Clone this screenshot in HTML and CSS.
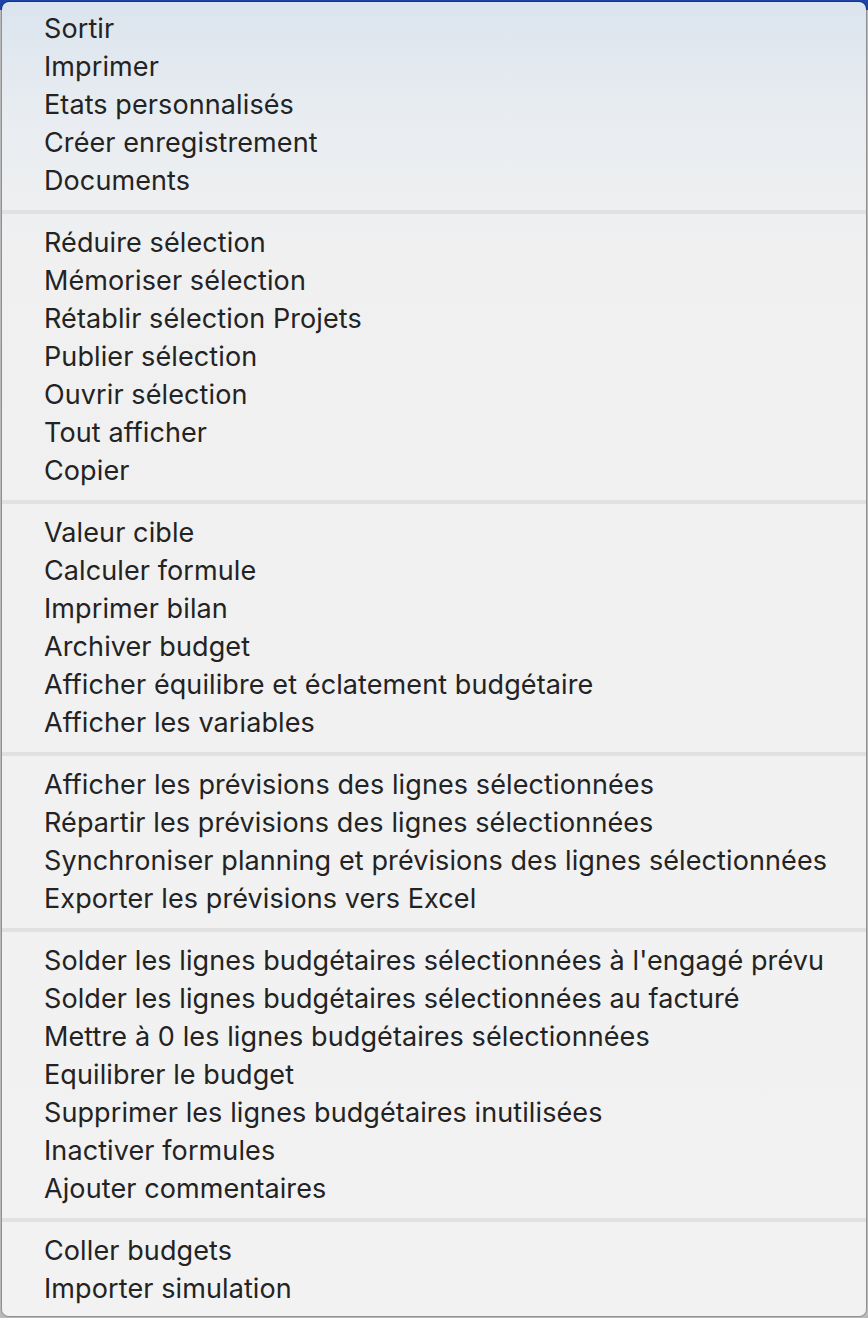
FILE: index.html
```html
<!DOCTYPE html>
<html lang="fr">
<head>
<meta charset="utf-8">
<title>Menu</title>
<link rel="stylesheet" href="styles.css">
</head>
<body>
<div class="menu">
  <div class="group">
    <div class="item">Sortir</div>
    <div class="item">Imprimer</div>
    <div class="item">Etats personnalisés</div>
    <div class="item">Créer enregistrement</div>
    <div class="item">Documents</div>
  </div>
  <div class="sep"></div>
  <div class="group">
    <div class="item">Réduire sélection</div>
    <div class="item">Mémoriser sélection</div>
    <div class="item">Rétablir sélection Projets</div>
    <div class="item">Publier sélection</div>
    <div class="item">Ouvrir sélection</div>
    <div class="item">Tout afficher</div>
    <div class="item">Copier</div>
  </div>
  <div class="sep"></div>
  <div class="group">
    <div class="item">Valeur cible</div>
    <div class="item">Calculer formule</div>
    <div class="item">Imprimer bilan</div>
    <div class="item">Archiver budget</div>
    <div class="item">Afficher équilibre et éclatement budgétaire</div>
    <div class="item">Afficher les variables</div>
  </div>
  <div class="sep"></div>
  <div class="group">
    <div class="item">Afficher les prévisions des lignes sélectionnées</div>
    <div class="item">Répartir les prévisions des lignes sélectionnées</div>
    <div class="item">Synchroniser planning et prévisions des lignes sélectionnées</div>
    <div class="item">Exporter les prévisions vers Excel</div>
  </div>
  <div class="sep"></div>
  <div class="group">
    <div class="item">Solder les lignes budgétaires sélectionnées à l'engagé prévu</div>
    <div class="item">Solder les lignes budgétaires sélectionnées au facturé</div>
    <div class="item">Mettre à 0 les lignes budgétaires sélectionnées</div>
    <div class="item">Equilibrer le budget</div>
    <div class="item">Supprimer les lignes budgétaires inutilisées</div>
    <div class="item">Inactiver formules</div>
    <div class="item">Ajouter commentaires</div>
  </div>
  <div class="sep"></div>
  <div class="group">
    <div class="item">Coller budgets</div>
    <div class="item">Importer simulation</div>
  </div>
</div>
</body>
</html>
```

FILE: styles.css
```css
html, body {
  margin: 0;
  padding: 0;
}
body {
  width: 868px;
  height: 1318px;
  overflow: hidden;
  background: linear-gradient(#1d44a6 0, #1d44a6 10px, #b9b9b9 10px, #b9b9b9 100%);
  padding: 2px 2px 2px 2px;
  box-sizing: border-box;
  font-family: Inter, "Noto Sans", sans-serif;
}
.menu {
  width: 864px;
  height: 1314px;
  box-sizing: border-box;
  border-radius: 7px;
  padding: 7px 0 9px 0;
  background: linear-gradient(#dbe4ee 0, #e9edf1 120px, #f0f0f0 260px, #f2f2f2 100%);
  box-shadow: 0 0 0 1px rgba(0, 0, 0, 0.22);
  display: flex;
  flex-direction: column;
}
.group {
  display: flex;
  flex-direction: column;
}
.item {
  height: 38px;
  line-height: 38px;
  padding: 1px 0 0 42px;
  box-sizing: border-box;
  font-size: 27px;
  letter-spacing: 0.1px;
  color: #232323;
  white-space: nowrap;
}
.sep {
  height: 4px;
  margin: 11px 0 9px 0;
  background: #e1e1e1;
}
```
